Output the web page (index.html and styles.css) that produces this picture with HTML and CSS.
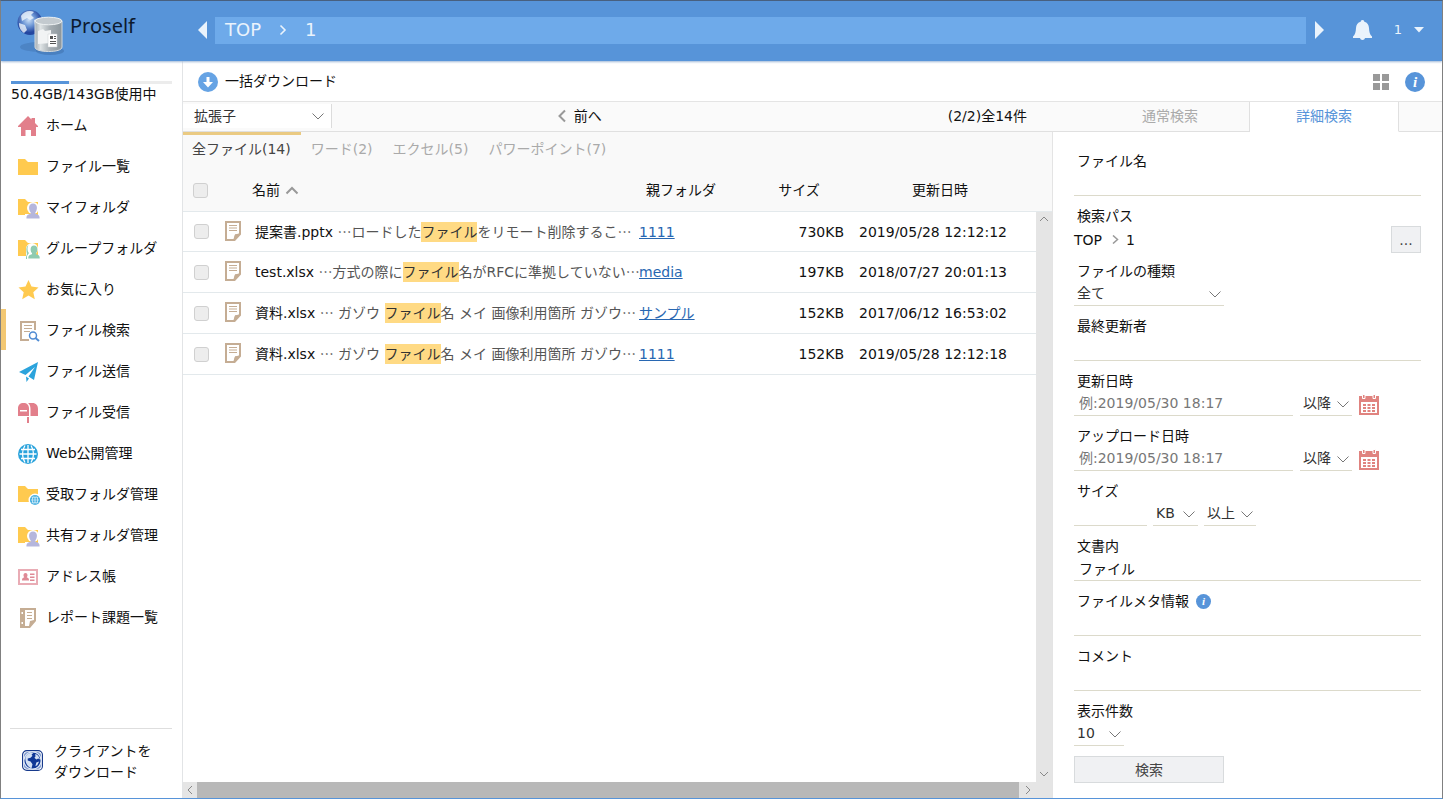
FILE: index.html
```html
<!DOCTYPE html>
<html lang="ja">
<head>
<meta charset="utf-8">
<title>Proself</title>
<meta name="viewport" content="width=device-width, initial-scale=1">
<link rel="stylesheet" href="styles.css">
</head>
<body>
<svg class="defs" aria-hidden="true">
  <defs>
    <symbol id="folder" viewBox="0 0 22 22"><path fill="#ffca4f" d="M0 3h7l3 3h10v13H0z"/></symbol>
    <symbol id="person" viewBox="0 0 16 18"><path d="M8 1c2.600 0 4.200 1.800 4.200 4.500 0 2-.7 3.800-1.700 4.700v1.600c2.600.6 4.500 1.600 4.500 4V17H1v-1.200c0-2.400 1.900-3.400 4.500-4v-1.600C4.500 9.300 3.800 7.500 3.800 5.500 3.800 2.800 5.400 1 8 1z"/></symbol>
    <symbol id="globe" viewBox="0 0 20 20"><circle cx="10" cy="10" r="10" fill="#2ba3dc"/><path fill="none" stroke="#fff" stroke-width="1.300" d="M10 1v18M1.500 10h17M3 5.500h14M3 14.500h14M7 1.500C3.700 6.500 3.700 13.500 7 18.500M13 1.500c3.300 5 3.300 12 0 17"/></symbol>
    <symbol id="doc" viewBox="0 0 16 20"><path fill="#c5ad94" fill-rule="evenodd" d="M0 0h16v13.500L10 20H0zM2 2v16h6.500l1.500-4.500 4-1V2z"/><path fill="#c5ad94" d="M4 4h8v1H4zm0 2.500h8v1H4zM4 9h8v1H4zM8.500 19.500L10 13.500l5.500-1z"/></symbol>
    <symbol id="calendar" viewBox="0 0 20 21"><path fill="#e0837f" fill-rule="evenodd" d="M0 2h20v19H0zM2 8v11h16V8z"/><path fill="#e0837f" stroke="#fff" d="M3.500.5h2.500v4H3.500zM14 .5h2.500v4H14z"/><path fill="#e0837f" d="M4 10h3v2H4zm4.500 0h3v2h-3zM13 10h3v2h-3zM4 13h3v2H4zm4.500 0h3v2h-3zM13 13h3v2h-3zM4 16h3v2H4zm4.500 0h3v2h-3zM13 16h3v2h-3z"/></symbol>
    <linearGradient id="metal"><stop offset="0" stop-color="#a3adb3"/><stop offset=".2" stop-color="#dfe4e6"/><stop offset=".55" stop-color="#a6aeb3"/><stop offset="1" stop-color="#8b959b"/></linearGradient>
    <radialGradient id="sphere" cx=".45" cy=".4"><stop offset="0" stop-color="#c9def6"/><stop offset=".5" stop-color="#6f98d6"/><stop offset="1" stop-color="#2447a0"/></radialGradient>
  </defs>
</svg>

<header class="topbar">
  <a class="brand" href="#">
    <svg width="50" height="50" viewBox="0 0 50 50" aria-hidden="true">
      <ellipse cx="24" cy="41" rx="20" ry="5" fill="#3c6ca8" opacity=".4"/>
      <ellipse cx="34" cy="45" rx="14" ry="4" fill="#3c6ca8" opacity=".5"/>
      <circle cx="14" cy="16.500" r="12.500" fill="url(#sphere)"/>
      <path fill="#edf5fd" opacity=".8" d="M5 10c3-5 9-6 13-4l-3 3 3 3-4 2-3-2-5 3zM3 17l6 2 2 5-3 3c-3-2-5-5-5-10zM18 14l6-2 2 5-7 2z"/>
      <path fill="url(#metal)" stroke="#d5dadd" d="M19 15v26c0 3 6 4.500 13.500 4.500S46 44 46 41V15z"/>
      <ellipse cx="32.500" cy="15" rx="13.500" ry="3.800" fill="#c3cacf" stroke="#eef2f3"/>
      <path fill="#f1f3f4" d="M22 25l5-2 2 2 6-1v13l-13 1z"/>
      <path fill="#fff" stroke="#c8ccd0" stroke-width=".5" d="M32 28h9v13h-9z"/>
      <path fill="#555" d="M34 30h3v3h-3zM38 30h2v1h-2zM38 32h2v1h-2zM34 35h6v1h-6zM34 37h6v1h-6z"/>
    </svg>
    <span class="brand-name">Proself</span>
  </a>
  <button class="icon-btn" type="button" aria-label="戻る"><svg width="10" height="18" viewBox="0 0 10 18"><path fill="#eaf3fc" d="M10 0v18L1 9z"/></svg></button>
  <nav class="crumbs" aria-label="現在のフォルダ">
    <a href="#">TOP</a>
    <svg width="8" height="12" viewBox="0 0 8 12" aria-hidden="true"><path fill="none" stroke="#eaf3fc" stroke-width="1.600" d="M1.500 1.500L6 6l-4.500 4.500"/></svg>
    <a href="#">1</a>
  </nav>
  <button class="icon-btn" type="button" aria-label="進む"><svg width="9" height="18" viewBox="0 0 9 18"><path fill="#eaf3fc" d="M0 0v18l9-9z"/></svg></button>
  <button class="icon-btn bell" type="button" aria-label="お知らせ"><svg width="19" height="20" viewBox="0 0 19 20"><path fill="#eaf3fc" d="M9.500 0c1.300 0 1.800.8 1.800 1.700 3 .7 4.500 3 4.700 6.300.2 4 .8 6.500 3 8.500V18h-7c-.3 1.300-1.200 2-2.500 2S7.300 19.300 7 18H0v-1.500c2.200-2 2.800-4.500 3-8.500.2-3.300 1.700-5.600 4.700-6.300C7.700.8 8.200 0 9.500 0z"/></svg></button>
  <button class="icon-btn user" type="button"><span>1</span><svg width="10" height="6" viewBox="0 0 10 6"><path fill="#eaf3fc" d="M0 0h10L5 5.500z"/></svg></button>
</header>

<aside class="sidebar">
  <div class="quota">
    <div class="quota-track"><div class="quota-used" style="width:36%"></div></div>
    <div class="quota-text">50.4GB/143GB使用中</div>
  </div>
  <nav class="menu">
    <a href="#"><svg viewBox="0 0 22 22"><path fill="#e27f8b" d="M10 1l3.500 3.500V3H17v5l3 3v1h-2v9h-5v-6H7.500v6H3v-9H0v-1z"/></svg>ホーム</a>
    <a href="#"><svg><use href="#folder"/></svg>ファイル一覧</a>
    <a href="#"><svg viewBox="0 0 22 22"><use href="#folder" width="22" height="22" y="-1"/><circle cx="15" cy="11" r="6" fill="#fff"/><path fill="#fff" d="M7 17h8v5H7z"/><use href="#person" x="7.500" y="5.500" width="15" height="17" fill="#b5b6dc"/></svg>マイフォルダ</a>
    <a href="#"><svg viewBox="0 0 22 22"><use href="#folder" width="22" height="22" y="-1"/><circle cx="14" cy="11" r="6" fill="#fff"/><path fill="#fff" d="M8 12h8v10H8z"/><path fill="#8fcbb0" d="M11 7c-2 1-2 6 0 8l-2 3v3H8v-2l1-3c-1-4-1-8 2-9z"/><use href="#person" x="9.500" y="5.500" width="13" height="17" fill="#8fcbb0"/></svg>グループフォルダ</a>
    <a href="#"><svg viewBox="0 0 22 22"><path fill="#ffca4f" d="M10.500 1l3 6.600 7 .8-5.200 4.800 1.500 7-6.300-3.600-6.300 3.600 1.500-7L.5 8.400l7-.8z"/></svg>お気に入り</a>
    <a href="#" class="current" aria-current="page"><svg viewBox="0 0 22 22"><path fill="none" stroke="#c5ad94" stroke-width="2" d="M17 10V2H3v18h8"/><path stroke="#c5ad94" d="M6 5.500h8M6 8.500h8M6 11.500h6"/><circle cx="15" cy="15.500" r="3.500" fill="#fff" stroke="#4f8bd3" stroke-width="1.500"/><path stroke="#4f8bd3" stroke-width="2" d="M17.500 18l3.500 3"/></svg>ファイル検索</a>
    <a href="#"><svg viewBox="0 0 22 22"><path fill="#2ba3dc" d="M20 1l-4 18-5.500-3.500L17 6 7.500 14 1 11zM8 15.500l3 2L8.500 21z"/></svg>ファイル送信</a>
    <a href="#"><svg viewBox="0 0 22 22"><path fill="#e27f8b" fill-rule="evenodd" d="M5.500 1C9 1 11 3 11 6.500V14H0V6.500C0 3 2 1 5.500 1zM2 8v1.500h7V8z"/><path fill="#e27f8b" d="M10 1h4.500C18 1 20 3.500 20 7v7h-7.500V7c0-3-1-5-2.500-6zM9 15h2v6H9z"/></svg>ファイル受信</a>
    <a href="#"><svg viewBox="0 -1 22 22"><use href="#globe" width="20" height="20"/></svg>Web公開管理</a>
    <a href="#"><svg viewBox="0 0 22 22"><use href="#folder" width="22" height="22" y="-1"/><circle cx="17" cy="16" r="6.500" fill="#fff"/><use href="#globe" x="12" y="11" width="10" height="10"/></svg>受取フォルダ管理</a>
    <a href="#"><svg viewBox="0 0 22 22"><use href="#folder" width="22" height="22" y="-1"/><circle cx="15" cy="11" r="6" fill="#fff"/><path fill="#fff" d="M7 17h8v5H7z"/><use href="#person" x="7.500" y="5.500" width="15" height="17" fill="#b5b6dc"/></svg>共有フォルダ管理</a>
    <a href="#"><svg viewBox="0 0 22 22"><path fill="none" stroke="#e9acb5" stroke-width="2" d="M1 4h18v14H1z"/><path fill="#df8a96" d="M7.500 7c1.500 0 2 1 2 2.300 0 1-.5 1.700-.8 2 1.500.5 2.300 1 2.300 3.200H4c0-2.200.8-2.700 2.300-3.200-.3-.3-.8-1-.8-2C5.500 8 6 7 7.500 7zM12 7.500h4.500V9H12zM12 10.500h4.500V12H12zM12 13.500h4.500V15H12z"/></svg>アドレス帳</a>
    <a href="#"><svg viewBox="0 0 22 22"><path fill="#c5ad94" fill-rule="evenodd" d="M2 1h16v13l-6 7H2zM7 3v16h4l1-5 4-1V3zM3.500 5v2H5V5zm0 10v2H5v-2zM9 5h5v1H9zm0 3h5v1H9zm0 3h5v1H9z"/></svg>レポート課題一覧</a>
  </nav>
  <a class="client" href="#">
    <svg width="21" height="21" viewBox="0 0 22 22" aria-hidden="true"><rect x=".6" y=".6" width="20.800" height="20.800" rx="4.500" fill="#fff" stroke="#173a8c" stroke-width="1.200"/><rect x="2" y="2" width="18" height="18" rx="4" fill="#7f9bd0"/><circle cx="11" cy="11" r="9" fill="#0f3796" stroke="#dfe8f7" stroke-width="1.200"/><path fill="#d3e0f3" d="M3.500 7C6 3 9 2.500 12 3l-2 2 1 1-2 2-3 1v2l3 1 2 3-1 4c-4-1-7-5-6.500-12zM14 4l3 2 2 4-2-1-2 1-2-2 1-1zM15 13l3-1-2 4-2 1z"/></svg>
    <span>クライアントを<br>ダウンロード</span>
  </a>
</aside>

<main class="content">
  <div class="toolbar">
    <button class="download" type="button"><svg width="20" height="20" viewBox="0 0 20 20" aria-hidden="true"><circle cx="10" cy="10" r="10" fill="#66a3e4"/><path fill="#fff" d="M8.500 5h3v5H15l-5 5.500L5 10h3.500z"/></svg>一括ダウンロード</button>
    <button class="icon-btn tiles" type="button" aria-label="表示切替"><svg width="16" height="16" viewBox="0 0 16 16"><path fill="#999" d="M0 0h7v7H0zM9 0h7v7H9zM0 9h7v7H0zM9 9h7v7H9z"/></svg></button>
    <button class="info" type="button" aria-label="情報">i</button>
  </div>

  <div class="pager">
    <select class="ext-select" aria-label="絞り込み"><option>拡張子</option></select>
    <a class="prev" href="#"><svg width="8" height="14" viewBox="0 0 8 14" aria-hidden="true"><path fill="none" stroke="#999" stroke-width="2" d="M7 1.500L1.500 7 7 12.500"/></svg>前へ</a>
    <span class="count">(2/2)全14件</span>
  </div>
  <div class="search-tabs" role="tablist">
    <button type="button" role="tab" aria-selected="false">通常検索</button>
    <button type="button" role="tab" aria-selected="true">詳細検索</button>
  </div>

  <section class="results">
    <div class="type-tabs" role="tablist">
      <button type="button" role="tab" aria-selected="true">全ファイル(14)</button>
      <button type="button" role="tab" aria-selected="false">ワード(2)</button>
      <button type="button" role="tab" aria-selected="false">エクセル(5)</button>
      <button type="button" role="tab" aria-selected="false">パワーポイント(7)</button>
    </div>
    <div class="list">
      <table>
        <colgroup><col class="c-check"><col class="c-icon"><col><col class="c-parent"><col class="c-size"><col class="c-date"></colgroup>
        <thead>
          <tr><th><input type="checkbox" aria-label="すべて選択"></th><th></th><th class="name">名前<svg width="14" height="9" viewBox="0 0 14 9" aria-hidden="true"><path fill="none" stroke="#999" stroke-width="2" d="M1.500 7.500L7 2l5.500 5.500"/></svg></th><th class="parent">親フォルダ</th><th class="center">サイズ</th><th class="center">更新日時</th></tr>
        </thead>
        <tbody>
          <tr><td><input type="checkbox" aria-label="提案書.pptx"></td><td class="icon"><svg width="16" height="20"><use href="#doc"/></svg></td><td class="name">提案書.pptx <span class="snippet"><i>…</i>ロードした<mark>ファイル</mark>をリモート削除するこ<i>…</i></span></td><td><a href="#">1111</a></td><td class="size">730KB</td><td class="date">2019/05/28 12:12:12</td></tr>
          <tr><td><input type="checkbox" aria-label="test.xlsx"></td><td class="icon"><svg width="16" height="20"><use href="#doc"/></svg></td><td class="name">test.xlsx <span class="snippet"><i>…</i>方式の際に<mark>ファイル</mark>名がRFCに準拠していない<i>…</i></span></td><td><a href="#">media</a></td><td class="size">197KB</td><td class="date">2018/07/27 20:01:13</td></tr>
          <tr><td><input type="checkbox" aria-label="資料.xlsx"></td><td class="icon"><svg width="16" height="20"><use href="#doc"/></svg></td><td class="name">資料.xlsx <span class="snippet"><i>…</i> ガゾウ <mark>ファイル</mark>名 メイ 画像利用箇所 ガゾウ<i>…</i></span></td><td><a href="#">サンプル</a></td><td class="size">152KB</td><td class="date">2017/06/12 16:53:02</td></tr>
          <tr><td><input type="checkbox" aria-label="資料.xlsx"></td><td class="icon"><svg width="16" height="20"><use href="#doc"/></svg></td><td class="name">資料.xlsx <span class="snippet"><i>…</i> ガゾウ <mark>ファイル</mark>名 メイ 画像利用箇所 ガゾウ<i>…</i></span></td><td><a href="#">1111</a></td><td class="size">152KB</td><td class="date">2019/05/28 12:12:18</td></tr>
        </tbody>
      </table>
      <div class="list-corner"></div>
      <div class="vscroll">
        <svg width="10" height="6" viewBox="0 0 10 6"><path fill="none" stroke="#888" d="M1 5l4-4 4 4"/></svg>
        <svg width="10" height="6" viewBox="0 0 10 6"><path fill="none" stroke="#888" d="M1 1l4 4 4-4"/></svg>
      </div>
      <div class="hscroll">
        <svg width="6" height="10" viewBox="0 0 6 10"><path fill="none" stroke="#888" d="M5 1L1 5l4 4"/></svg>
        <div class="thumb"></div>
        <svg width="6" height="10" viewBox="0 0 6 10"><path fill="none" stroke="#888" d="M1 1l4 4-4 4"/></svg>
      </div>
    </div>
  </section>

  <form class="filters">
    <div class="field"><label for="f-name">ファイル名</label><div class="row"><input id="f-name" type="text"></div></div>
    <div class="field"><span class="label">検索パス</span><div class="row path"><span>TOP</span><svg width="7" height="9" viewBox="0 0 7 9" aria-hidden="true"><path fill="none" stroke="#999" stroke-width="1.500" d="M1 .5l4.500 4L1 8.500"/></svg><span>1</span><button class="browse" type="button" aria-label="フォルダを選択">...</button></div></div>
    <div class="field"><label for="f-kind">ファイルの種類</label><div class="row"><select id="f-kind" class="w150"><option>全て</option></select></div></div>
    <div class="field"><label for="f-editor">最終更新者</label><div class="row"><input id="f-editor" type="text"></div></div>
    <div class="field"><label for="f-updated">更新日時</label><div class="row"><input id="f-updated" class="w218" type="text" placeholder="例:2019/05/30 18:17"><select class="w52" aria-label="更新日時の条件"><option>以降</option></select><button class="icon-btn" type="button" aria-label="カレンダー"><svg width="20" height="21"><use href="#calendar"/></svg></button></div></div>
    <div class="field"><label for="f-uploaded">アップロード日時</label><div class="row"><input id="f-uploaded" class="w218" type="text" placeholder="例:2019/05/30 18:17"><select class="w52" aria-label="アップロード日時の条件"><option>以降</option></select><button class="icon-btn" type="button" aria-label="カレンダー"><svg width="20" height="21"><use href="#calendar"/></svg></button></div></div>
    <div class="field"><label for="f-size">サイズ</label><div class="row tight"><input id="f-size" class="w73" type="text"><select class="w45" aria-label="単位"><option>KB</option></select><select class="w52" aria-label="サイズの条件"><option>以上</option></select></div></div>
    <div class="field"><label for="f-body">文書内</label><div class="row"><input id="f-body" type="text" value="ファイル"></div></div>
    <div class="field"><label for="f-meta">ファイルメタ情報<span class="info small">i</span></label><div class="row"><input id="f-meta" type="text"></div></div>
    <div class="field"><label for="f-comment">コメント</label><div class="row"><input id="f-comment" type="text"></div></div>
    <div class="field"><label for="f-count">表示件数</label><div class="row"><select id="f-count" class="w50"><option>10</option></select></div></div>
    <button class="submit" type="submit">検索</button>
  </form>
</main>
</body>
</html>
```

FILE: styles.css
```css
* { box-sizing: border-box; }

body {
  margin: 0;
  height: 100vh;
  display: grid;
  grid-template: 60px minmax(0, 1fr) / 182px minmax(0, 1fr);
  border: 1px solid #808080;
  border-top-color: #48607f;
  border-bottom-color: #5794d9;
  background: #fff;
  color: #111;
  font: 14px/20px "DejaVu Sans", "Noto Sans CJK JP", sans-serif;
}

a { color: inherit; text-decoration: none; }
svg { display: block; flex: none; }
.defs { position: absolute; width: 0; height: 0; }

button, input, select {
  margin: 0;
  padding: 0;
  border: 0;
  border-radius: 0;
  background: none;
  color: inherit;
  font: inherit;
}

/* top bar */
.topbar {
  grid-column: 1 / -1;
  z-index: 1;
  display: flex;
  align-items: center;
  padding: 0 18px 2px 0;
  background: #5794d9;
  box-shadow: 0 1px 2px #9fb8d6;
  color: #eaf3fc;
}
.brand {
  display: flex;
  gap: 4px;
  width: 196px;
  padding: 2px 0 0 15px;
  color: #0c1a2e;
}
.brand-name { font: 20px/40px "Noto Sans", sans-serif; }
.crumbs {
  flex: 1;
  display: flex;
  align-items: center;
  gap: 18px;
  height: 27px;
  margin: 0 9px 0 8px;
  padding-left: 10px;
  background: #6eaaea;
  font-size: 18px;
}
.bell { margin-left: 29px; }
.user { display: flex; align-items: center; gap: 12px; margin-left: 22px; font-size: 13px; }

/* sidebar */
.sidebar {
  display: flex;
  flex-direction: column;
  border-right: 1px solid #e2e4e6;
}
.quota { padding: 20px 10px 0; }
.quota-track { height: 3px; background: #ececec; }
.quota-used { height: 3px; background: #5794d9; }
.menu { flex: 1; }
.menu a {
  display: flex;
  align-items: center;
  gap: 6px;
  height: 41px;
  padding: 0 0 0 17px;
}
.menu svg { width: 22px; height: 22px; margin-top: 2px; }
.menu .current { border-left: 5px solid #f3c873; padding-left: 12px; }
.client {
  display: flex;
  align-items: center;
  gap: 11px;
  margin: 0 10px 0 9px;
  padding: 12px 0 15px 12px;
  border-top: 1px solid #dedede;
  line-height: 21px;
}
.client svg { margin-bottom: 3px; }

/* content */
.content {
  display: grid;
  grid-template: 41px 30px minmax(0, 1fr) / minmax(0, 1fr) 389px;
}
.toolbar {
  grid-column: 1 / -1;
  display: flex;
  align-items: center;
  padding: 0 17px 0 15px;
  border-bottom: 1px solid #e4e4e4;
}
.toolbar svg, .toolbar .info { margin-top: 2px; }
.download { display: flex; align-items: center; gap: 7px; margin-right: auto; }
.info {
  width: 20px;
  height: 20px;
  margin-left: 16px;
  border-radius: 50%;
  background: #5794d9;
  color: #fff;
  font: italic bold 15px/20px "Liberation Serif", serif;
  text-align: center;
}
.info.small {
  width: 15px;
  height: 15px;
  margin-left: 7px;
  font-size: 11px;
  line-height: 15px;
}

.pager {
  display: grid;
  grid-template-columns: 149px 11fr 5fr;
  align-items: center;
  padding-bottom: 1px;
  border-bottom: 1px solid #e0e0e0;
  background: #fafafa;
}
.prev { display: flex; justify-content: center; align-items: center; gap: 8px; }
.count { padding-right: 26px; text-align: right; white-space: nowrap; }

.search-tabs {
  display: flex;
  background: #fafafa;
}
.search-tabs::after { content: ""; flex: 1; border-bottom: 1px solid #e0e0e0; }
.search-tabs button {
  width: 149px;
  padding-bottom: 1px;
  border: solid #e0e0e0;
  border-width: 0 1px 1px 0;
  color: #aaa;
}
.search-tabs button:first-child { width: 197px; padding-left: 38px; }
.search-tabs [aria-selected="true"] {
  border-bottom-color: #fff;
  background: #fff;
  color: #5794d9;
}

select {
  appearance: none;
  height: 23px;
  padding-left: 3px;
  border-bottom: 1px solid #dcdacb;
  background: url("data:image/svg+xml,%3Csvg xmlns='http://www.w3.org/2000/svg' width='12' height='7'%3E%3Cpath d='M.5.5l5.500 5.500 5.500-5.500' fill='none' stroke='%23777'/%3E%3C/svg%3E") no-repeat right 3px center;
  color: #333;
}
.ext-select {
  height: 24px;
  padding-left: 11px;
  border-right: 1px solid #dcdcdc;
  border-bottom: 0;
  background-color: #fff;
  background-position: right 7px center;
}

/* results */
.results {
  display: flex;
  flex-direction: column;
  border-right: 1px solid #e4e4e4;
}
.type-tabs {
  display: flex;
  background: #f9f9f9;
}
.type-tabs button {
  height: 35px;
  padding: 0 10px 4px;
  border-top: 3px solid transparent;
  color: #aaa;
}
.type-tabs button:first-child { padding-left: 9px; }
.type-tabs [aria-selected="true"] { border-top-color: #eaca82; color: #444; }
.list {
  flex: 1;
  min-height: 0;
  display: grid;
  grid-template: 45px minmax(0, 1fr) 16px / minmax(0, 1fr) 16px;
}
.list-corner { grid-area: 1 / 2; border-bottom: 1px solid #e3e9ec; background: #f9f9f9; }
table {
  grid-area: 1 / 1 / 3 / 2;
  align-self: start;
  width: 100%;
  border-collapse: separate;
  border-spacing: 0;
  table-layout: fixed;
}
.c-check { width: 37px; }
.c-icon { width: 32px; }
.c-parent { width: 115px; }
.c-size { width: 90px; }
.c-date { width: 192px; }
th, td {
  height: 41px;
  padding: 0;
  border-bottom: 1px solid #e3e9ec;
  font-weight: normal;
  text-align: left;
  white-space: nowrap;
}
tbody tr:first-child td { height: 40px; }
th { height: 45px; padding-top: 2px; background: #f9f9f9; }
th:first-child { padding-left: 10px; }
td:first-child { padding-left: 11px; }
td.icon { padding: 0 0 2px 5px; }
td.name { padding-left: 3px; }
th.name svg { display: inline-block; margin-left: 5px; }
.parent { padding-left: 7px; }
.center { text-align: center; }
.size { text-align: right; }
.date { padding-left: 15px; }
td a { color: #2867b2; text-decoration: underline; }
.snippet { color: #555; }
.snippet i { font-family: "Noto Sans CJK JP", sans-serif; font-style: normal; line-height: 1; }
mark { padding: 2px 0; background: #ffda84; color: #333; }
input[type="checkbox"] {
  appearance: none;
  display: block;
  width: 15px;
  height: 15px;
  border: 1px solid #d0d0d0;
  border-radius: 3px;
  background: #ededed;
}

.vscroll {
  grid-area: 2 / 2 / 4 / 3;
  display: flex;
  flex-direction: column;
  justify-content: space-between;
  align-items: center;
  padding: 4px 0 21px;
  background: #e5e5e5;
}
.hscroll {
  grid-area: 3 / 1;
  display: flex;
  align-items: center;
  gap: 4px;
  padding: 0 5px 0 4px;
  background: #e5e5e5;
}
.thumb { flex: 1; height: 100%; margin-right: 2px; background: #b8b8b8; }

/* search form */
.filters { padding: 9px 21px 0; }
.field { height: 55px; padding-top: 8px; }
.field label, .label { display: flex; align-items: center; height: 24px; padding-left: 3px; line-height: 24px; }
.row { display: flex; align-items: center; gap: 7px; height: 23px; }
.row.tight { gap: 6px; }
.row input {
  flex: 1;
  min-width: 0;
  height: 23px;
  padding: 0 5px 2px;
  border-bottom: 1px solid #dcdacb;
}
.row select { padding-bottom: 2px; }
::placeholder { color: #777; opacity: 1; }
.row .w218 { flex: none; width: 219px; }
.row .w73 { flex: none; width: 73px; }
.w150 { width: 150px; }
.w52 { width: 52px; }
.w50 { width: 50px; }
.w45 { width: 45px; }
.path svg { margin-left: 3px; }
.browse, .submit {
  height: 27px;
  border: 1px solid #d8dbdd;
  background: #f0f1f3;
  color: #444;
}
.browse { width: 30px; margin-left: auto; }
.submit { width: 150px; margin-top: 10px; }
```
